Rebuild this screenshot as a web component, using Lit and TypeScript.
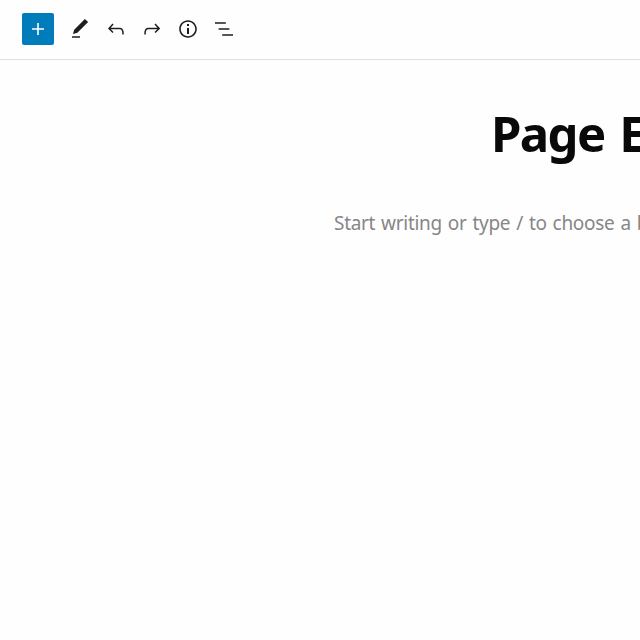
import { LitElement, html, css, svg } from "lit";

const icon = (paths: unknown) =>
  html`<svg class="icon" viewBox="0 0 24 24" width="24" height="24" aria-hidden="true">${paths}</svg>`;

class EditorToolbar extends LitElement {
  static styles = css`
    :host { display: flex; align-items: center; height: 60px; padding: 0 0 1px 22px; border-bottom: 1px solid #e0e0e0; background: #fefefe; flex: none; box-sizing: border-box; }
    .bar { display: flex; align-items: center; gap: 8px; }
    button { border: 0; padding: 0; margin: 0; background: none; color: #1e1e1e; width: 28px; height: 32px; display: flex; align-items: center; justify-content: center; }
    .add { width: 32px; background: #007cba; color: #fff; border-radius: 2px; margin-right: 4px; }
    .icon { fill: currentColor; display: block; flex: none; }
  `;
  render() {
    return html`<div class="bar">
      <button class="add" aria-label="Add block">${icon(svg`<path d="M18 11.2h-5.2V6h-1.6v5.2H6v1.6h5.2V18h1.6v-5.2H18z"/>`)}</button>
      <button aria-label="Tools">${icon(svg`<path d="M20.1 5.1L16.9 2 6.2 12.7l-1.3 4.4 4.5-1.3L20.1 5.1zM4 20.8h8v-1.5H4v1.5z"/>`)}</button>
      <button aria-label="Undo">${icon(svg`<path d="M18.3 11.7c-.6-.6-1.4-.9-2.3-.9H6.7l2.9-3.3-1.1-1-4.5 5L8.5 16l1-1-2.7-2.7H16c.5 0 .9.2 1.3.5 1 1 1 3.4 1 4.5v.3h1.5v-.2c0-1.5 0-4.3-1.5-5.7z"/>`)}</button>
      <button aria-label="Redo">${icon(svg`<path d="M15.6 6.5l-1.1 1 2.9 3.3H8c-.9 0-1.7.3-2.3.9-1.4 1.5-1.4 4.2-1.4 5.6v.2h1.5v-.3c0-1.1 0-3.5 1-4.5.3-.3.7-.5 1.3-.5h9.2L14.5 15l1.1 1.1 4.6-4.6-4.6-5z"/>`)}</button>
      <button aria-label="Details">${icon(svg`<path d="M12 3.2c-4.8 0-8.8 3.9-8.8 8.8 0 4.8 3.9 8.8 8.8 8.8 4.8 0 8.8-3.9 8.8-8.8 0-4.8-4-8.8-8.8-8.8zm0 16c-4 0-7.2-3.3-7.2-7.2C4.8 8 8 4.8 12 4.8s7.2 3.3 7.2 7.2c0 4-3.2 7.2-7.2 7.2zM11 17h2v-6h-2v6zm0-8h2V7h-2v2z" fill-rule="evenodd"/>`)}</button>
      <button aria-label="List view">${icon(svg`<path d="M13.8 5.2H3v1.5h10.8V5.2zm-3.6 12v1.5H21v-1.5H10.2zm7.2-6H6.6v1.5h10.8v-1.5z"/>`)}</button>
    </div>`;
  }
}
customElements.define("editor-toolbar", EditorToolbar);

class AppRoot extends LitElement {
  static styles = css`
    :host { display: flex; flex-direction: column; height: 640px; width: 640px; overflow: hidden; background: #fefefe; font-family: "Noto Sans", "Open Sans", sans-serif; }
    main { white-space: nowrap; }
    h1 { margin: 40px 0 0 491px; font-size: 49px; line-height: 66px; font-weight: 700; color: #090909; letter-spacing: -1.6px; word-spacing: 3.5px; }
    p { margin: 41px 0 0 334px; font-size: 19px; line-height: 32px; color: #868686; letter-spacing: -0.3px; word-spacing: 1.3px; }
  `;
  render() {
    return html`<editor-toolbar></editor-toolbar>
      <main><h1>Page Editor</h1><p>Start writing or type / to choose a block</p></main>`;
  }
}
customElements.define("app-root", AppRoot);
